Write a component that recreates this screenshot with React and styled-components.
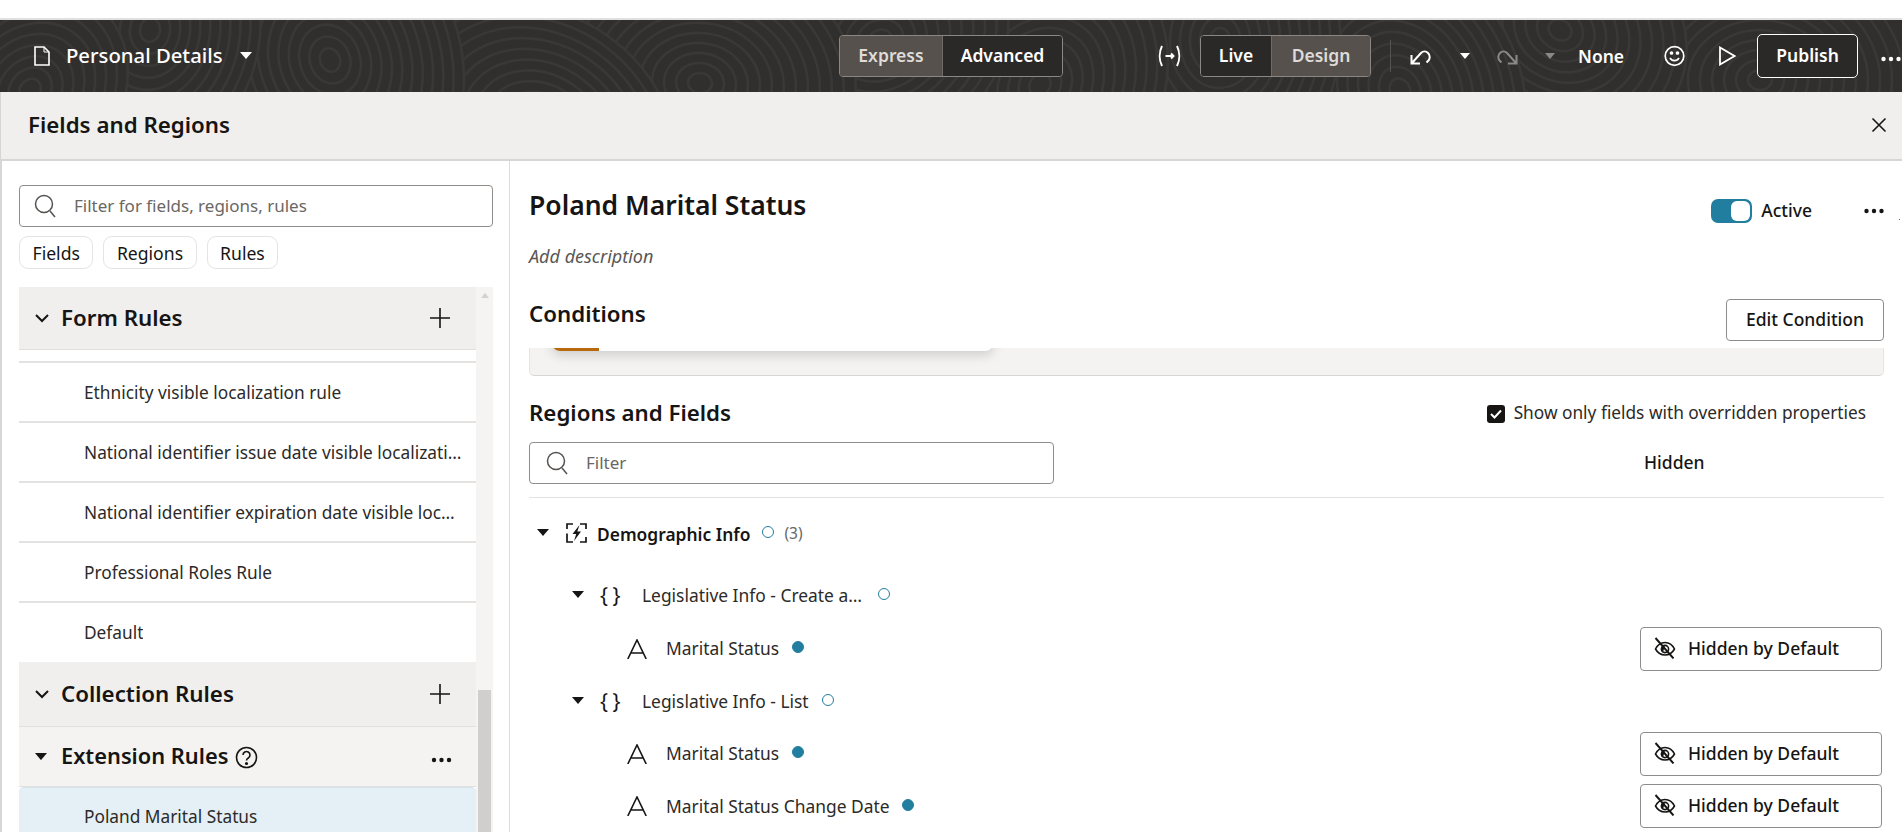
import React from "react";
import styled, { createGlobalStyle } from "styled-components";

const Global = createGlobalStyle`
  html, body { margin: 0; padding: 0; background: #fff; }
  body { font-family: "Noto Sans", "Open Sans", sans-serif; color: #161513; }
  * { box-sizing: border-box; }
`;

const Page = styled.div`
  width: 1902px; height: 832px; overflow: hidden; display: flex; flex-direction: column;
  background: #fff; padding-top: 18px;
`;
const Header = styled.header`
  position: relative; flex: 0 0 74px; height: 74px; display: flex; align-items: center;
  background: #312f2d; border-top: 2px solid #e0e0e0; color: #fff; overflow: hidden;
`;
const Texture = styled.svg`
  position: absolute; left: 0; top: 0; width: 1902px; height: 72px; pointer-events: none;
`;
const HeaderLeft = styled.div`
  position: relative; flex: 0 0 839px; display: flex; align-items: center; padding-left: 34px;
`;
const PageTitle = styled.span`
  font-size: 20.3px; font-weight: 500; margin: -3px 17px 0 16px; color: #fff;
`;
const Segmented = styled.div`
  position: relative; display: flex; height: 42px; border: 1px solid #8a8784; border-radius: 4px; overflow: hidden;
  margin-left: ${p => p.$ml || 0}px;
`;
const Segment = styled.div`
  width: ${p => p.$w}px; display: flex; align-items: center; justify-content: center; padding-bottom: 2px;
  font-size: 17.5px; font-weight: 600; color: ${p => (p.$on ? "#dedbd8" : "#fff")};
  background: ${p => (p.$on ? "#56514d" : "#2b2927")};
  & + & { border-left: 1px solid #6e6b68; }
`;
const ToolIcon = styled.svg`
  position: relative; flex: none; margin-left: ${p => p.$ml || 0}px; display: block;
`;
const VRule = styled.div`
  position: relative; width: 1px; height: 32px; background: #55524f; margin-left: 19px;
`;
const NoneLabel = styled.span`
  position: relative; font-size: 17.5px; font-weight: 600; margin: -1px 0 0 23px; color: #fff;
`;
const Publish = styled.button`
  position: relative; width: 101px; height: 44px; margin-left: 21px; border: 1px solid #fff; border-radius: 5px;
  background: #2b2927; color: #fff; font: 600 17.5px "Noto Sans", sans-serif; padding: 0 0 2px;
`;

const TitleBar = styled.div`
  flex: 0 0 69px; display: flex; align-items: center; justify-content: space-between;
  padding: 0 15px 2px 27px; background: #f0efed; border-bottom: 2px solid #d8d6d4; border-left: 1px solid #d8d6d4;
`;
const TitleText = styled.h1`
  margin: 0; font-size: 22.3px; font-weight: 600; line-height: 28px;
`;

const Body = styled.div`
  flex: 1; min-height: 0; display: flex; border-left: 2px solid #d8d6d4;
`;
const LeftPanel = styled.aside`
  flex: 0 0 508px; display: flex; flex-direction: column; padding: 24px 0 0 17px; border-right: 1px solid #dedcda;
`;
const SearchBox = styled.div`
  width: ${p => p.$w}px; height: 42px; flex: none; display: flex; align-items: center; gap: 17px; padding: 0 0 1px ${p => p.$pad}px;
  border: 1px solid #8f8c89; border-radius: 4px; font-size: 17px; color: #6a6764;
`;
const Chips = styled.div`
  display: flex; gap: 10px; margin-top: 9px; flex: none;
`;
const Chip = styled.div`
  height: 33px; padding: 0 12.5px; display: flex; align-items: center; font-size: 17.6px;
  border: 1px solid #e6e4e2; border-radius: 9px; background: #fff; color: #161513;
`;
const ListWrap = styled.div`
  flex: 1; min-height: 0; display: flex; margin-top: 18px; width: 474px;
`;
const List = styled.div`
  width: 457px; display: flex; flex-direction: column;
`;
const SectionHead = styled.div`
  flex: none; height: ${p => p.$h}px; display: flex; align-items: center; position: relative;
  background: ${p => (p.$light ? "#f4f3f1" : "#f0efed")}; border-bottom: 1px solid #e2e0de; padding-left: 16px;
`;
const SectionName = styled.span`
  font-size: ${p => p.$size || 22.3}px; font-weight: 600; margin: ${p => p.$mt || 0}px 0 0 ${p => p.$ml}px; line-height: 28px;
`;
const HeadAction = styled.svg`
  position: absolute; right: ${p => p.$r}px; top: 50%; transform: translateY(-50%);
`;
const HelpIcon = styled.svg`
  margin: 2px 0 0 7px; flex: none;
`;
const Gap = styled.div`
  flex: none; height: 13px; border-bottom: 2px solid #e4e2e0;
`;
const RuleRow = styled.div`
  flex: none; height: ${p => p.$h || 60}px; display: flex; align-items: center; padding: 0 13px 0 65px;
  border-bottom: ${p => (p.$last ? "none" : "2px solid #e4e2e0")}; font-size: 17.3px; color: #2c2a28; min-width: 0;
`;
const RuleText = styled.span`
  overflow: hidden; white-space: nowrap; text-overflow: ellipsis;
`;
const Selected = styled.div`
  flex: 1; display: flex; align-items: flex-start; padding: 17px 13px 0 65px; background: #e4f0f6;
  border-top: 1px solid #d5e3ea; border-radius: 5px 5px 0 0; font-size: 17.3px; color: #2c2a28;
`;
const Track = styled.div`
  width: 17px; background: #f5f4f2; display: flex; flex-direction: column; justify-content: space-between; align-items: center;
`;
const TrackArrow = styled.div`
  margin-top: 6px; width: 0; height: 0; border-left: 4px solid transparent; border-right: 4px solid transparent; border-bottom: 5px solid #d4d2d0;
`;
const Thumb = styled.div`
  width: 13px; height: 142px; background: #d0cfcd;
`;

const RightPanel = styled.main`
  position: relative; flex: 1; min-width: 0; padding: 24px 18px 0 19px; display: flex; flex-direction: column;
`;
const TitleRow = styled.div`
  height: 42px; display: flex; align-items: center; justify-content: space-between; flex: none;
`;
const RuleTitle = styled.h2`
  margin: -2px 0 0; font-size: 26.5px; font-weight: 600; line-height: 34px;
`;
const Actions = styled.div`
  display: flex; align-items: center; margin-top: 9px;
`;
const Toggle = styled.div`
  width: 41px; height: 24px; border-radius: 7px; background: #227e9e; position: relative; flex: none;
`;
const Knob = styled.div`
  position: absolute; right: 2px; top: 2px; width: 19px; height: 20px; border-radius: 6px; background: #fff;
`;
const ActiveLabel = styled.span`
  font-size: 17.5px; font-weight: 500; margin: -2px 52px 0 9px;
`;
const Speck = styled.i`
  position: absolute; right: 2px; top: 58px; width: 1px; height: 1px; background: #8a6a3a;
`;
const Description = styled.div`
  margin-top: 17px; height: 25px; line-height: 24px; font-size: 18px; font-style: italic; color: #5a5754; flex: none;
`;
const ConditionRow = styled.div`
  margin-top: 30px; height: 42px; display: flex; justify-content: space-between; align-items: flex-start; flex: none;
`;
const SubHeading = styled.h3`
  margin: ${p => p.$mt || 0}px 0 0; font-size: 22.3px; font-weight: 600; line-height: 28px;
`;
const OutlineBtn = styled.button`
  width: ${p => p.$w}px; height: ${p => p.$h}px; background: #fff; border: 1px solid #8f8c89; border-radius: 4px;
  font: 500 17.5px "Noto Sans", sans-serif; color: #161513; display: flex; align-items: center; justify-content: ${p => (p.$start ? "flex-start" : "center")};
  padding: ${p => (p.$start ? "0 0 2px 13px" : "0 0 2px")}; gap: 12px; flex: none;
`;
const ConditionBox = styled.div`
  position: relative; margin-top: 7px; height: 28px; flex: none; overflow: hidden; background: #f4f3f1;
  border-bottom: 1px solid #d8d6d4; border-right: 1px solid #e6e4e2; border-left: 1px solid #e6e4e2; border-radius: 0 0 5px 5px;
`;
const ConditionCard = styled.div`
  position: absolute; left: 22px; top: -60px; width: 441px; height: 63px; background: #fff; border-radius: 8px;
  box-shadow: 0 4px 12px rgba(0,0,0,0.16); overflow: hidden;
`;
const CardStripe = styled.div`
  position: absolute; left: 1px; bottom: 0; width: 46px; height: 3px; background: #b8690e;
`;
const RegionsHead = styled.div`
  margin-top: 25px; height: 24px; display: flex; justify-content: space-between; align-items: center; flex: none;
`;
const CheckWrap = styled.label`
  display: flex; align-items: center; gap: 9px; font-size: 17.3px; color: #2c2a28; margin-right: 18px;
  line-height: 22px;
`;
const CheckBox = styled.span`
  width: 18px; height: 18px; background: #161513; border-radius: 3px; display: flex; align-items: center; justify-content: center;
  margin-top: 2px;
`;
const FilterRow = styled.div`
  margin-top: 17px; display: flex; align-items: center; flex: none; padding-bottom: 13px; border-bottom: 1px solid #e4e2e0;
`;
const HiddenHead = styled.div`
  margin: -2px 0 0 590px; font-size: 17.5px; font-weight: 500;
`;
const TreeRow = styled.div`
  flex: none; height: ${p => p.$h}px; display: flex; align-items: center; padding-left: ${p => p.$indent}px; position: relative;
`;
const Label = styled.span`
  font-size: 17.4px; font-weight: ${p => (p.$bold ? 600 : 400)}; color: ${p => (p.$bold ? "#161513" : "#2c2a28")};
  margin-left: ${p => p.$ml}px; margin-top: ${p => (p.$bold ? 1 : -1)}px;
`;
const Braces = styled.span`
  font-size: 21px; margin-left: 16px; width: 21px; white-space: nowrap; line-height: 1; word-spacing: -1px; color: #161513;
`;
const Dot = styled.span`
  width: 12px; height: 12px; border-radius: 50%; flex: none; margin-left: ${p => p.$ml}px; margin-top: -3px;
  background: ${p => (p.$filled ? "#227e9e" : "#fff")}; border: 1.5px solid #227e9e;
`;
const Count = styled.span`
  font-size: 15.5px; color: #6a6764; margin-left: 10px;
`;
const RowBtnSlot = styled.div`
  position: absolute; right: 2px; top: 50%; transform: translateY(-50%);
`;

const Caret = ({ c = "#161513", w = 12, ml = 0 }) => (
  <ToolIcon $ml={ml} width={w} height={w * 0.6} viewBox="0 0 12 7"><path d="M0 0h12L6 7z" fill={c} /></ToolIcon>
);
const Chevron = () => (
  <svg width="14" height="9" viewBox="0 0 14 9" fill="none" stroke="#161513" strokeWidth="2"><path d="M1 1l6 6 6-6" /></svg>
);
const PlusIcon = () => (
  <HeadAction $r={26} width="20" height="20" viewBox="0 0 20 20" stroke="#161513" strokeWidth="1.6"><path d="M10 0v20M0 10h20" /></HeadAction>
);
const SearchIcon = () => (
  <svg width="23" height="24" viewBox="0 0 23 24" fill="none" stroke="#55524f" strokeWidth="1.5"><circle cx="10" cy="10" r="8.5" /><path d="M16 17l5 6" /></svg>
);
const Dots = ({ c = "#161513", size = 20 }) => (
  <svg width={size} height="6" viewBox="0 0 20 6" fill={c}><circle cx="2.5" cy="3" r="2.2" /><circle cx="10" cy="3" r="2.2" /><circle cx="17.5" cy="3" r="2.2" /></svg>
);
const EyeOff = () => (
  <svg width="22" height="22" viewBox="0 0 22 22" fill="none" stroke="#161513" strokeWidth="1.6">
    <path d="M1.5 12C4 7 7.5 5.500 11 5.500S18 7 20.500 12C18 16.500 14.500 18 11 18S4 16.500 1.500 12Z" />
    <path d="M11 8a4 4 0 0 0-2 7.500z" fill="#161513" stroke="none" />
    <circle cx="11" cy="12" r="3.600" />
    <path d="M1.500 1l18 20.500" strokeWidth="1.900" />
  </svg>
);
const LetterA = () => (
  <ToolIcon width="20" height="20" viewBox="0 0 20 20" fill="none" stroke="#161513" strokeWidth="1.6"><path d="M.8 20L10 1l9.200 19M4 14h12" /></ToolIcon>
);
const RegionIcon = () => (
  <ToolIcon $ml={17} width="21" height="20" viewBox="0 0 21 20" fill="#161513" stroke="none">
    <path d="M7 1H1v5M14 1h6v5M1 10.500V19h6M20 14v5h-6" fill="none" stroke="#161513" strokeWidth="1.700" />
    <path d="M13.500 2L6.500 11h3.700L8 18l7-9.500h-3.700L13.500 2z" />
  </ToolIcon>
);
const Arcs = () => {
  const blobs = [
    [1760, 60, 120], [1560, 10, 110], [1400, 70, 120], [1220, 20, 120], [1040, 65, 120], [880, 20, 110],
    [700, 63, 130], [540, 115, 120], [330, 40, 130], [150, 10, 110], [30, 70, 90],
  ];
  return (
    <Texture viewBox="0 0 1902 72" fill="#312f2d" stroke="#3a3836" strokeWidth="2.600">
      {blobs.flatMap(([x, y, R], i) => {
        const rings = [];
        for (let r = R; r >= 10; r -= 10) rings.push(r);
        return rings.map(r => (
          <ellipse key={i + "-" + r} cx={x} cy={y} rx={r * 1.2} ry={r} transform={`rotate(${i * 31} ${x} ${y})`} />
        ));
      })}
    </Texture>
  );
};

const rules = [
  "Ethnicity visible localization rule",
  "National identifier issue date visible localization rule",
  "National identifier expiration date visible localization rule",
  "Professional Roles Rule",
];

export default function App() {
  return (
    <Page>
      <Global />
      <Header>
        <Arcs />
        <HeaderLeft>
          <svg width="16" height="20" viewBox="0 0 16 20" fill="none" stroke="#fff" strokeWidth="1.600"><path d="M1 1h9l5 5v13H1z" /><path d="M10 1v5h5" strokeWidth="1" /></svg>
          <PageTitle>Personal Details</PageTitle>
          <Caret c="#fff" />
        </HeaderLeft>
        <Segmented>
          <Segment $w={102} $on>Express</Segment>
          <Segment $w={120}>Advanced</Segment>
        </Segmented>
        <ToolIcon $ml={95} width="23" height="22" viewBox="0 0 23 22" fill="none" stroke="#fff" strokeWidth="2">
          <path d="M4 1C1 7 1 15 4 21M19 1c3 6 3 14 0 20M7.500 11h8M13 8.500l2.500 2.500-2.500 2.500" />
        </ToolIcon>
        <Segmented $ml={19}>
          <Segment $w={70}>Live</Segment>
          <Segment $w={99} $on>Design</Segment>
        </Segmented>
        <VRule />
        <ToolIcon $ml={19} width="22" height="18" viewBox="0 0 22 18" fill="none" stroke="#fff" strokeWidth="2">
          <path d="M1.500 8v8.500h8.500M1.500 16.500L11 6a5 5 0 0 1 7 0 5.500 5.500 0 0 1 0 8l-1.500 1.500" />
        </ToolIcon>
        <Caret c="#fff" w={10} ml={28} />
        <ToolIcon $ml={26} width="22" height="18" viewBox="0 0 22 18" fill="none" stroke="#8b8987" strokeWidth="2">
          <path d="M20.500 8v8.500H12M20.500 16.500L11 6a5 5 0 0 0-7 0 5.500 5.500 0 0 0 0 8l1.500 1.500" />
        </ToolIcon>
        <Caret c="#8b8987" w={10} ml={27} />
        <NoneLabel>None</NoneLabel>
        <ToolIcon $ml={40} width="21" height="22" viewBox="0 0 21 22" fill="none" stroke="#fff" strokeWidth="1.700">
          <circle cx="10.500" cy="11" r="9.300" /><path d="M6 13c2 3.500 7 3.500 9 0" /><circle cx="7.500" cy="8" r="1" fill="#fff" /><circle cx="13.500" cy="8" r="1" fill="#fff" />
        </ToolIcon>
        <ToolIcon $ml={33} width="18" height="20" viewBox="0 0 18 20" fill="none" stroke="#fff" strokeWidth="1.800"><path d="M2 1.500v17L16.500 10z" /></ToolIcon>
        <Publish>Publish</Publish>
        <ToolIcon as="div" $ml={23}><Dots c="#fff" /></ToolIcon>
      </Header>

      <TitleBar>
        <TitleText>Fields and Regions</TitleText>
        <svg width="16" height="16" viewBox="0 0 16 16" stroke="#161513" strokeWidth="1.600"><path d="M1.500 1.500l13 13M14.500 1.500l-13 13" /></svg>
      </TitleBar>

      <Body>
        <LeftPanel>
          <SearchBox $w={474} $pad={14}>
            <SearchIcon />
            <span>Filter for fields, regions, rules</span>
          </SearchBox>
          <Chips>
            <Chip>Fields</Chip>
            <Chip>Regions</Chip>
            <Chip>Rules</Chip>
          </Chips>
          <ListWrap>
            <List>
              <SectionHead $h={63}>
                <Chevron />
                <SectionName $ml={12}>Form Rules</SectionName>
                <PlusIcon />
              </SectionHead>
              <Gap />
              {rules.map(r => (
                <RuleRow key={r}><RuleText>{r}</RuleText></RuleRow>
              ))}
              <RuleRow $last $h={59}><RuleText>Default</RuleText></RuleRow>
              <SectionHead $h={65}>
                <Chevron />
                <SectionName $ml={12}>Collection Rules</SectionName>
                <PlusIcon />
              </SectionHead>
              <SectionHead $h={60} $light>
                <Caret />
                <SectionName $ml={14} $size={21.800} $mt={-2}>Extension Rules</SectionName>
                <HelpIcon width="23" height="23" viewBox="0 0 23 23" fill="none" stroke="#161513" strokeWidth="1.600">
                  <circle cx="11.500" cy="11.500" r="10" /><path d="M8 9a3.500 3.500 0 1 1 5.300 3c-1.200.7-1.800 1.300-1.800 2.500" /><circle cx="11.500" cy="17.500" r=".8" fill="#161513" />
                </HelpIcon>
                <HeadAction as="div" $r={24}><Dots size={21} /></HeadAction>
              </SectionHead>
              <Selected>Poland Marital Status</Selected>
            </List>
            <Track>
              <TrackArrow />
              <Thumb />
            </Track>
          </ListWrap>
        </LeftPanel>

        <RightPanel>
          <TitleRow>
            <RuleTitle>Poland Marital Status</RuleTitle>
            <Actions>
              <Toggle><Knob /></Toggle>
              <ActiveLabel>Active</ActiveLabel>
              <Dots />
            </Actions>
          </TitleRow>
          <Speck />
          <Description>Add description</Description>
          <ConditionRow>
            <SubHeading $mt={1}>Conditions</SubHeading>
            <OutlineBtn $w={158} $h={42}>Edit Condition</OutlineBtn>
          </ConditionRow>
          <ConditionBox>
            <ConditionCard><CardStripe /></ConditionCard>
          </ConditionBox>
          <RegionsHead>
            <SubHeading>Regions and Fields</SubHeading>
            <CheckWrap>
              <CheckBox>
                <svg width="12" height="10" viewBox="0 0 12 10" fill="none" stroke="#fff" strokeWidth="2"><path d="M1 5l3.500 3.500L11 1.500" /></svg>
              </CheckBox>
              <span style={undefined}>Show only fields with overridden properties</span>
            </CheckWrap>
          </RegionsHead>
          <FilterRow>
            <SearchBox $w={525} $pad={16}>
              <SearchIcon />
              <span>Filter</span>
            </SearchBox>
            <HiddenHead>Hidden</HiddenHead>
          </FilterRow>
          <TreeRow $h={70} $indent={8}>
            <Caret />
            <RegionIcon />
            <Label $bold $ml={10}>Demographic Info</Label>
            <Dot $ml={12} />
            <Count>(3)</Count>
          </TreeRow>
          <TreeRow $h={54} $indent={43}>
            <Caret />
            <Braces>{"{ }"}</Braces>
            <Label $ml={21}>Legislative Info - Create a…</Label>
            <Dot $ml={16} />
          </TreeRow>
          <TreeRow $h={53} $indent={98}>
            <LetterA />
            <Label $ml={19}>Marital Status</Label>
            <Dot $filled $ml={13} />
            <RowBtnSlot><OutlineBtn $w={242} $h={44} $start><EyeOff />Hidden by Default</OutlineBtn></RowBtnSlot>
          </TreeRow>
          <TreeRow $h={52} $indent={43}>
            <Caret />
            <Braces>{"{ }"}</Braces>
            <Label $ml={21}>Legislative Info - List</Label>
            <Dot $ml={13} />
          </TreeRow>
          <TreeRow $h={53} $indent={98}>
            <LetterA />
            <Label $ml={19}>Marital Status</Label>
            <Dot $filled $ml={13} />
            <RowBtnSlot><OutlineBtn $w={242} $h={44} $start><EyeOff />Hidden by Default</OutlineBtn></RowBtnSlot>
          </TreeRow>
          <TreeRow $h={52} $indent={98}>
            <LetterA />
            <Label $ml={19}>Marital Status Change Date</Label>
            <Dot $filled $ml={12} />
            <RowBtnSlot><OutlineBtn $w={242} $h={44} $start><EyeOff />Hidden by Default</OutlineBtn></RowBtnSlot>
          </TreeRow>
        </RightPanel>
      </Body>
    </Page>
  );
}
